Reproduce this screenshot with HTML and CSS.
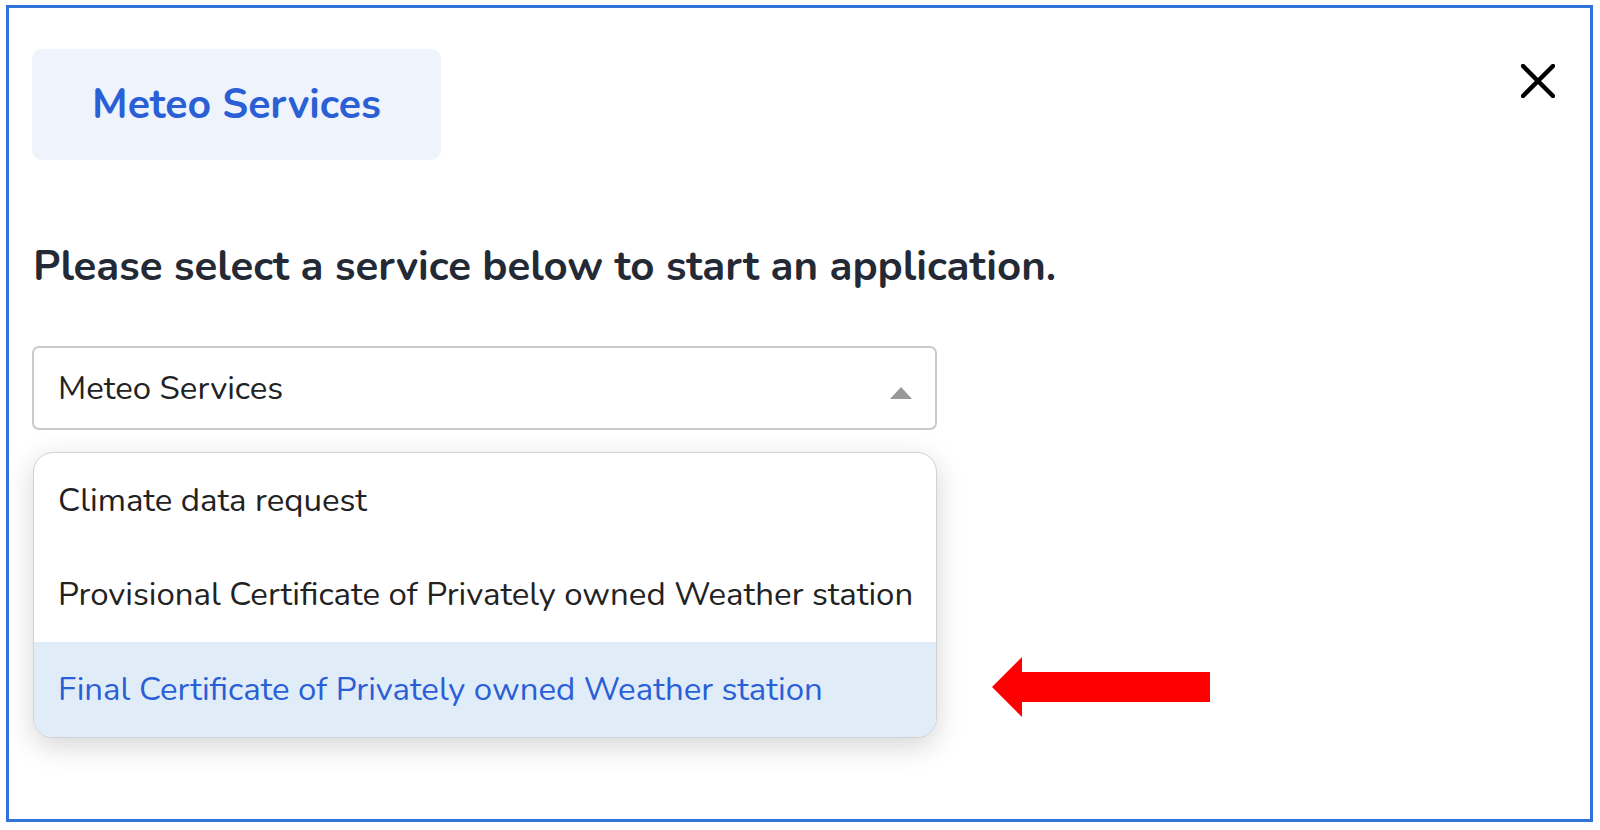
FILE: index.html
```html
<!DOCTYPE html>
<html lang="en">
<head>
<meta charset="utf-8">
<title>Meteo Services</title>
<link rel="stylesheet" href="styles.css">
</head>
<body>
<div class="frame">
  <div class="top">
    <div class="badge">Meteo Services</div>
    <button class="close" aria-label="Close">
      <svg width="34" height="34" viewBox="0 0 34 34"><path d="M2 2 L32 32 M32 2 L2 32" stroke="#000" stroke-width="4.5" stroke-linecap="round"/></svg>
    </button>
  </div>
  <h1 class="heading">Please select a service below to start an application.</h1>
  <div class="select">
    <span class="select-value">Meteo Services</span>
    <span class="caret"></span>
  </div>
  <ul class="menu">
    <li class="item">Climate data request</li>
    <li class="item">Provisional Certificate of Privately owned Weather station</li>
    <li class="item active">Final Certificate of Privately owned Weather station</li>
  </ul>
  <svg class="arrow" width="220" height="62" viewBox="0 0 220 62"><polygon points="0,30 30,0 30,15 218,15 218,45 30,45 30,60" fill="#ff0000"/></svg>
</div>
</body>
</html>
```

FILE: styles.css
```css
* { box-sizing: border-box; }
html, body { margin: 0; padding: 0; background: #fff; }
body { font-family: Nunito, Lato, "Open Sans", sans-serif; }

.frame {
  position: relative;
  margin: 5px 0 0 6px;
  width: 1587px;
  height: 817px;
  border: 3px solid #3272d9;
  padding: 41px 0 0 23px;
}

.top {
  display: flex;
  justify-content: space-between;
  align-items: flex-start;
}

.badge {
  width: 409px;
  height: 111px;
  border-radius: 10px;
  background: #eef3fc;
  color: #2a5fd6;
  font-weight: 700;
  font-size: 41px;
  display: flex;
  align-items: center;
  justify-content: center;
}

.close {
  margin: 15px 35px 0 0;
  padding: 0;
  border: 0;
  background: none;
  width: 34px;
  height: 34px;
  display: flex;
}

.heading {
  margin: 83px 0 0 1px;
  font-size: 42px;
  line-height: 48px;
  font-weight: 700;
  color: #232a35;
}

.select {
  margin-top: 55px;
  width: 905px;
  height: 84px;
  border: 2px solid #c9c9c9;
  border-radius: 7px;
  display: flex;
  align-items: center;
  justify-content: space-between;
  padding: 0 23px 0 24px;
}

.select-value {
  font-size: 33px;
  color: #222;
}

.caret {
  width: 0;
  height: 0;
  border-left: 11.5px solid transparent;
  border-right: 11.5px solid transparent;
  border-bottom: 12px solid #999;
  margin-top: 10px;
}

.menu {
  list-style: none;
  margin: 22px 0 0 1px;
  padding: 0;
  width: 904px;
  border: 1px solid #d2d2d2;
  border-radius: 20px;
  overflow: hidden;
  box-shadow: 0 8px 28px rgba(0, 0, 0, 0.17);
  background: #fff;
}

.item {
  height: 94.5px;
  display: flex;
  align-items: center;
  padding-left: 24px;
  font-size: 33px;
  color: #222;
}

.item.active {
  background: #e1ecf9;
  color: #2a5fd6;
}

.arrow {
  position: absolute;
  left: 983px;
  top: 649px;
}
```
